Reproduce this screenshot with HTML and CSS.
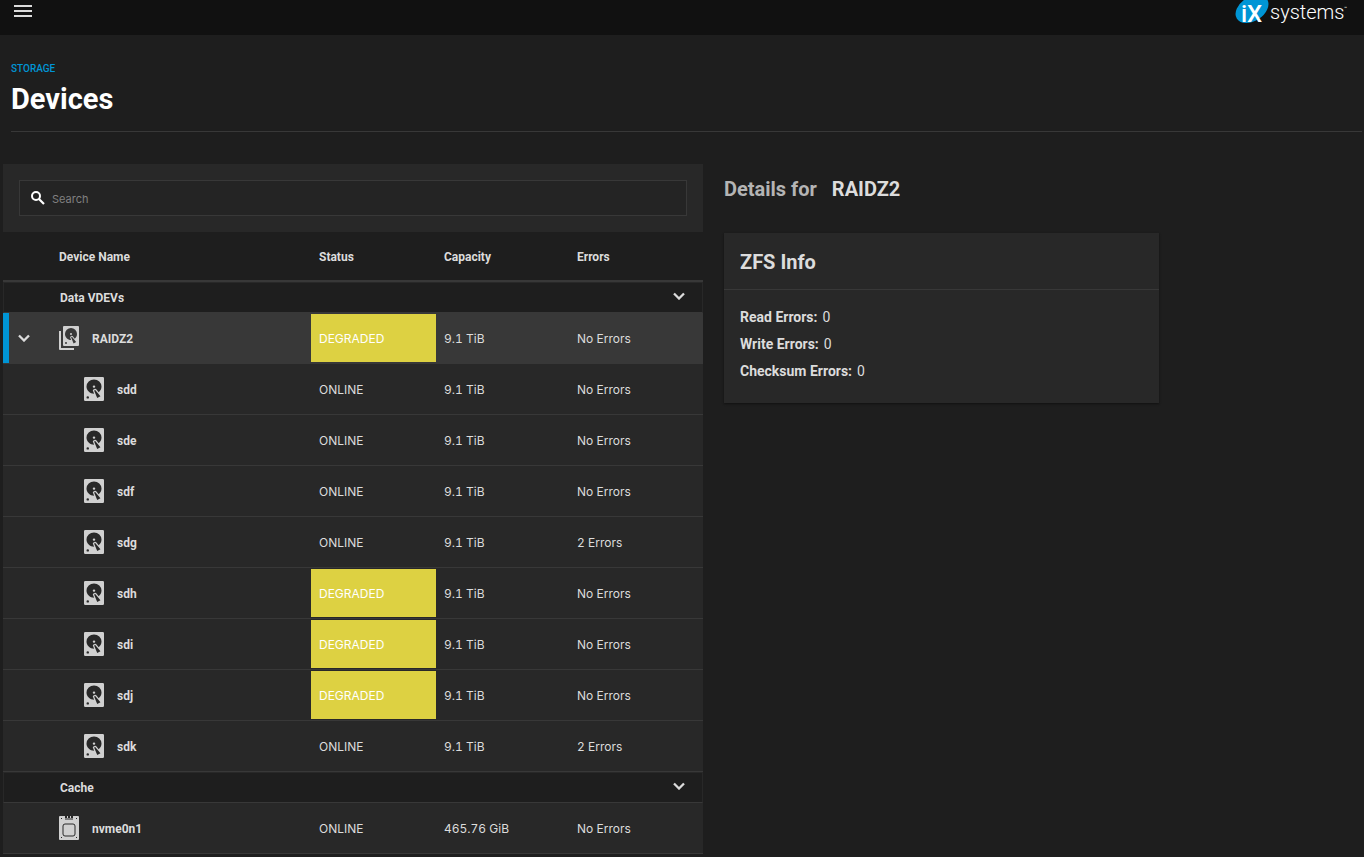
FILE: index.html
```html
<!DOCTYPE html>
<html lang="en">
<head>
  <meta charset="UTF-8" />
  <title>Devices - Storage</title>
  <meta name="viewport" content="width=device-width, initial-scale=1" />
  <link rel="stylesheet" href="styles.css">
</head>
<body>
  <!-- Shared icons -->
  <svg class="sprite" aria-hidden="true">
    <symbol id="disk" viewBox="4 2 16 20" preserveAspectRatio="none">
      <path d="M5,2H19A1,1 0 0,1 20,3V21A1,1 0 0,1 19,22H5A1,1 0 0,1 4,21V3A1,1 0 0,1 5,2M12,4A6,6 0 0,0 6,10C6,13.31 8.69,16 12.1,16L11.22,13.77C10.95,13.29 11.11,12.68 11.59,12.4L12.45,11.9C12.93,11.63 13.54,11.79 13.82,12.27L15.74,14.69C17.12,13.59 18,11.9 18,10A6,6 0 0,0 12,4M12,9A1,1 0 0,1 13,10A1,1 0 0,1 12,11A1,1 0 0,1 11,10A1,1 0 0,1 12,9M7,18A1,1 0 0,0 6,19A1,1 0 0,0 7,20A1,1 0 0,0 8,19A1,1 0 0,0 7,18M12.09,13.27L14.58,19.58L17.17,18.08L12.95,12.77L12.09,13.27Z"/>
    </symbol>
    <symbol id="disks" viewBox="0 0 20 24">
      <use href="#disk" x="4" y="0" width="16" height="20"/>
      <path d="M0 5h2v17h13v2H1a1 1 0 0 1-1-1z"/>
    </symbol>
    <symbol id="nvme" viewBox="0 0 20 24">
      <path fill-rule="evenodd" d="M1 0H6V2H8V0H9V2H11V0H12V2H14V0H19A1 1 0 0 1 20 1V23A1 1 0 0 1 19 24H1A1 1 0 0 1 0 23V1A1 1 0 0 1 1 0M2 2V3H3V2M17 2V3H18V2M2 21V22H3V21M17 21V22H18V21"/>
      <path d="M6 3h8" fill="none" stroke="#282828"/>
      <rect x="4" y="8" width="12" height="12" rx="2" fill="none" stroke="#282828"/>
    </symbol>
    <symbol id="chevron" viewBox="0 0 12 8">
      <path d="M1 1.500l5 5 5-5" fill="none" stroke="currentColor" stroke-width="2.300"/>
    </symbol>
  </svg>

  <header class="topbar">
    <button class="menu" type="button" aria-label="Menu"><span></span><span></span><span></span></button>
    <a class="logo" href="#" aria-label="iXsystems">
      <svg width="114" height="32" viewBox="0 0 114 32">
        <ellipse cx="17" cy="9" rx="18" ry="12" transform="rotate(-33 17 9)" fill="#0095d5"/>
        <g fill="#fff">
          <text class="logo-i" x="6" y="22">i</text>
          <text class="logo-x" x="12" y="22">X</text>
          <text class="logo-name" x="35" y="19">systems</text>
          <text class="logo-tm" x="109" y="10">™</text>
        </g>
      </svg>
    </a>
  </header>

  <div class="page-title">
    <a href="#">STORAGE</a>
    <h1>Devices</h1>
  </div>

  <main>
    <section class="devices">
      <div class="search-panel">
        <div class="search">
          <svg width="14" height="14" viewBox="0 0 14 14"><circle cx="5" cy="5" r="4" fill="none" stroke="#fff" stroke-width="2"/><path d="M8 8l5 5" stroke="#fff" stroke-width="2.200"/></svg>
          <input type="text" placeholder="Search" aria-label="Search">
        </div>
      </div>

      <table>
        <colgroup>
          <col><col class="col-status"><col class="col-capacity"><col class="col-errors">
        </colgroup>
        <thead>
          <tr><th scope="col" class="name-head">Device Name</th><th scope="col">Status</th><th scope="col">Capacity</th><th scope="col">Errors</th></tr>
        </thead>
        <tbody>
          <tr class="group"><th colspan="4" scope="rowgroup"><div><span>Data VDEVs</span><button type="button" aria-label="Toggle Data VDEVs"><svg class="chevron"><use href="#chevron"/></svg></button></div></th></tr>
          <tr class="selected">
            <td><div class="name"><button type="button" aria-label="Collapse RAIDZ2"><svg class="chevron"><use href="#chevron"/></svg></button><svg class="icon"><use href="#disks"/></svg><span>RAIDZ2</span></div></td>
            <td><span class="status degraded">DEGRADED</span></td><td>9.1 TiB</td><td>No Errors</td>
          </tr>
          <tr>
            <td><div class="name child"><svg class="icon"><use href="#disk"/></svg><span>sdd</span></div></td>
            <td><span class="status">ONLINE</span></td><td>9.1 TiB</td><td>No Errors</td>
          </tr>
          <tr>
            <td><div class="name child"><svg class="icon"><use href="#disk"/></svg><span>sde</span></div></td>
            <td><span class="status">ONLINE</span></td><td>9.1 TiB</td><td>No Errors</td>
          </tr>
          <tr>
            <td><div class="name child"><svg class="icon"><use href="#disk"/></svg><span>sdf</span></div></td>
            <td><span class="status">ONLINE</span></td><td>9.1 TiB</td><td>No Errors</td>
          </tr>
          <tr>
            <td><div class="name child"><svg class="icon"><use href="#disk"/></svg><span>sdg</span></div></td>
            <td><span class="status">ONLINE</span></td><td>9.1 TiB</td><td>2 Errors</td>
          </tr>
          <tr>
            <td><div class="name child"><svg class="icon"><use href="#disk"/></svg><span>sdh</span></div></td>
            <td><span class="status degraded">DEGRADED</span></td><td>9.1 TiB</td><td>No Errors</td>
          </tr>
          <tr>
            <td><div class="name child"><svg class="icon"><use href="#disk"/></svg><span>sdi</span></div></td>
            <td><span class="status degraded">DEGRADED</span></td><td>9.1 TiB</td><td>No Errors</td>
          </tr>
          <tr>
            <td><div class="name child"><svg class="icon"><use href="#disk"/></svg><span>sdj</span></div></td>
            <td><span class="status degraded">DEGRADED</span></td><td>9.1 TiB</td><td>No Errors</td>
          </tr>
          <tr>
            <td><div class="name child"><svg class="icon"><use href="#disk"/></svg><span>sdk</span></div></td>
            <td><span class="status">ONLINE</span></td><td>9.1 TiB</td><td>2 Errors</td>
          </tr>
        </tbody>
        <tbody>
          <tr class="group"><th colspan="4" scope="rowgroup"><div><span>Cache</span><button type="button" aria-label="Toggle Cache"><svg class="chevron"><use href="#chevron"/></svg></button></div></th></tr>
          <tr>
            <td><div class="name"><svg class="icon"><use href="#nvme"/></svg><span>nvme0n1</span></div></td>
            <td><span class="status">ONLINE</span></td><td>465.76 GiB</td><td>No Errors</td>
          </tr>
        </tbody>
      </table>
    </section>

    <section class="details">
      <h2><span>Details for</span> RAIDZ2</h2>
      <div class="card">
        <h3>ZFS Info</h3>
        <dl>
          <div><dt>Read Errors:</dt><dd>0</dd></div>
          <div><dt>Write Errors:</dt><dd>0</dd></div>
          <div><dt>Checksum Errors:</dt><dd>0</dd></div>
        </dl>
      </div>
    </section>
  </main>
</body>
</html>
```
FILE: styles.css
```css
:root {
  --bg: #1e1e1e;
  --panel: #282828;
  --line: #383838;
  --text: #dcdcdc;
  --primary: #0095d5;
}

* { box-sizing: border-box; }

body {
  margin: 0;
  background: var(--bg);
  color: var(--text);
  font-family: Inter, "Liberation Sans", sans-serif;
  font-size: 12px;
}

button { padding: 0; border: 0; background: none; color: inherit; cursor: pointer; }
svg { display: block; }
.sprite { position: absolute; width: 0; height: 0; }

/* Top bar */
.topbar {
  display: flex;
  justify-content: space-between;
  align-items: flex-start;
  height: 35px;
  padding: 0 15px 0 14px;
  background: #111;
}
.menu { display: grid; gap: 3px; width: 18px; padding-top: 5px; }
.menu span { height: 2px; background: var(--text); }
.logo-i, .logo-x { font: 500 24px Roboto, sans-serif; }
.logo-name { font: 300 20px Roboto, sans-serif; }
.logo-tm { font: 400 5px Roboto, sans-serif; }

/* Title */
.page-title {
  margin: 27px 2px 0 11px;
  padding-bottom: 14px;
  border-bottom: 1px solid var(--line);
}
.page-title a {
  display: block;
  font: 500 10px/13px Roboto, sans-serif;
  color: var(--primary);
  text-decoration: none;
}
h1 { margin: 7px 0 0; font: 700 29px/35px Roboto, sans-serif; color: #fff; }

main {
  display: grid;
  grid-template-columns: 700fr 640fr;
  gap: 21px;
  align-items: start;
  padding: 32px 0 0 3px;
}

/* Search */
.search-panel { padding: 16px; background: var(--panel); }
.search {
  display: flex;
  align-items: center;
  gap: 7px;
  height: 36px;
  padding: 0 11px;
  border: 1px solid var(--line);
  background: #242424;
}
.search input {
  flex: 1;
  padding: 2px 0 0;
  border: 0;
  outline: 0;
  background: none;
  color: var(--text);
  font: 11px/16px Inter, sans-serif;
}
.search input::placeholder { color: #808080; opacity: 1; }

/* Device table */
table { width: 100%; border-spacing: 0; table-layout: fixed; }
.col-status { width: 125px; }
.col-capacity { width: 133px; }
.col-errors { width: 134px; }
th, .name { font: 700 12px/16px Roboto, sans-serif; text-align: left; }
thead th { height: 50px; padding: 2px 8px 0; border-bottom: 2px solid var(--line); }
thead .name-head { padding-left: 56px; }

td {
  height: 51px;
  padding: 1px 8px 0;
  border-bottom: 1px solid var(--line);
  background: var(--panel);
  font-variant-numeric: tabular-nums;
}
td:first-child, td:nth-child(2) { padding: 0; }
.selected td { background: var(--line); }
.selected td:first-child { box-shadow: inset 6px 0 var(--primary); }

.group th { height: 31px; padding: 0; border: 1px solid var(--panel); border-bottom-color: var(--line); }
.group div { display: flex; justify-content: space-between; align-items: center; padding: 0 17px 0 56px; }
.group button { padding-bottom: 3px; }
.chevron { width: 12px; height: 8px; }

.name { display: flex; align-items: center; gap: 13px; padding-left: 56px; }
.name.child { padding-left: 81px; }
.name span { padding-top: 2px; }
.name button { width: 12px; margin-left: -41px; margin-right: 16px; }
.icon { width: 20px; height: 24px; fill: #d0d0d0; }

.status { display: block; height: 48px; padding: 1px 0 0 8px; line-height: 48px; }
.degraded { background: #ddd142; color: #fff; }

/* Details */
.details h2 { margin: 12px 0 31px; font: 700 20px/26px Roboto, sans-serif; }
.details h2 span { margin-right: 10px; color: #b4b4b4; }
.card { width: 68%; background: var(--panel); box-shadow: 0 1px 2px #111; }
.card h3 {
  margin: 0;
  padding: 16px 16px 14px;
  border-bottom: 1px solid var(--line);
  font: 700 20px/26px Roboto, sans-serif;
}
.card dl { margin: 0; padding: 14px 16px 18px; font: 14px/27px Roboto, sans-serif; }
.card dl div { display: flex; gap: 5px; }
.card dt { font-weight: 700; }
.card dd { margin: 0; }
```
